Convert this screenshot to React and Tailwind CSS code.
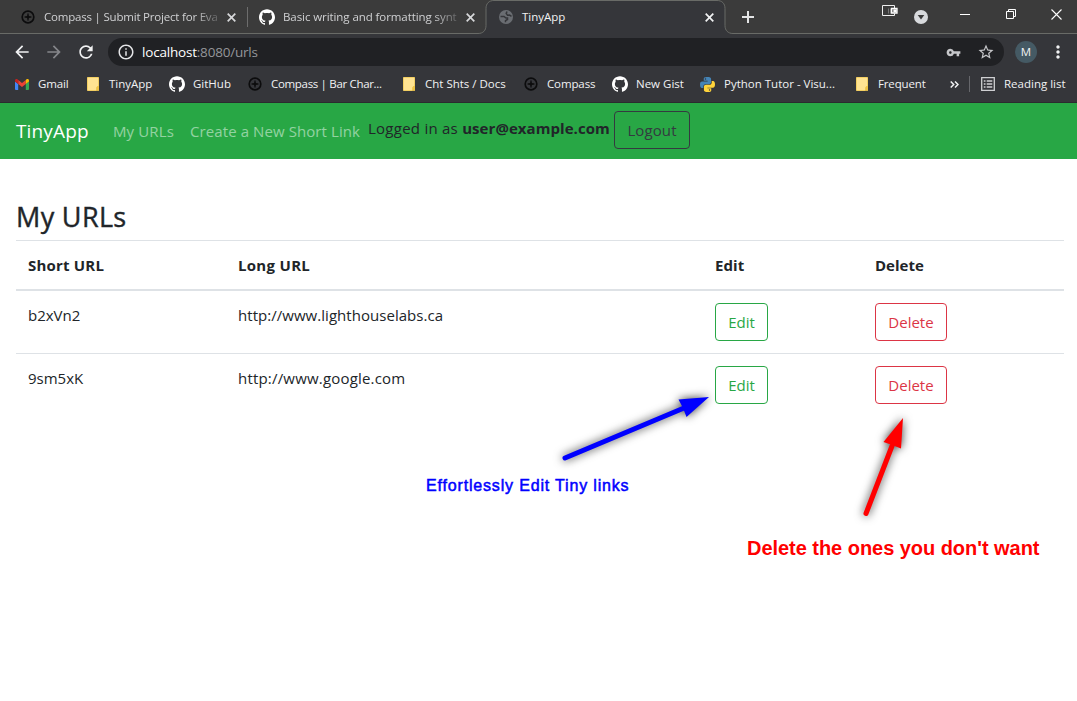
import React from "react";
import { SiGithub } from "react-icons/si";
import { MdRefresh, MdArrowBack, MdArrowForward, MdInfoOutline, MdStarBorder, MdVpnKey, MdMoreVert } from "react-icons/md";

function Compass() {
  return (
    <svg width="14" height="14" viewBox="0 0 14 14" fill="none" stroke="#0c0c0d" className="shrink-0">
      <circle cx="7" cy="7" r="5.8" strokeWidth="1.7" />
      <path d="M7 3.6v6.8M3.6 7h6.8" strokeWidth="1.3" />
      <path d="M7 5l2 2-2 2-2-2z" fill="#0c0c0d" stroke="none" />
    </svg>
  );
}

function Globe() {
  return (
    <svg width="14" height="14" viewBox="0 0 14 14" className="relative shrink-0">
      <circle cx="7" cy="7" r="7" fill="#6a6d72" />
      <path d="M1.500 6.500h3.500l2 1.500h1.500v1.500l-2 1.200v1.500" fill="none" stroke="#35363a" strokeWidth="1.500" />
      <path d="M8 1.500L7.200 3.500l1.300 1.700 2-.2 2 1.300" fill="none" stroke="#35363a" strokeWidth="1.500" />
    </svg>
  );
}

function Folder() {
  return (
    <svg width="12" height="14" viewBox="0 0 12 14" className="shrink-0">
      <path d="M.5.5h11v8.5l.5 0v4.5H.5z" fill="#ffe391" />
      <path d="M.5 .5h11V9M.5.5v13h9" fill="none" stroke="#f3cf62" />
      <path d="M9.2 13.8V10.5L10.5 9H12v4.8z" fill="#edc243" />
    </svg>
  );
}

function Gmail() {
  return (
    <svg width="14" height="11" viewBox="0 0 14 11" className="shrink-0">
      <path d="M0 2.5l3.2 2.4V11H1a1 1 0 0 1-1-1z" fill="#4285f4" />
      <path d="M14 2.5l-3.2 2.4V11H13a1 1 0 0 0 1-1z" fill="#34a853" />
      <path d="M3.2 1L7 3.9 10.8 1v4L7 7.9 3.2 5z" fill="#ea4335" />
      <path d="M0 2.5V1.6C0 .1 1.5-.5 2.7.5l.5.5v4z" fill="#c5221f" />
      <path d="M14 2.5V1.6C14 .1 12.500-.5 11.300.5l-.5.500v4z" fill="#fbbc04" />
    </svg>
  );
}

function Python() {
  const half = "M12 0C6.500 0 6 1.600 6 3v3h6.200v1H3.500C1 7 0 9 0 12s1 5.500 3 5.500h2.300V15c0-2 1.600-3.500 3.600-3.500h5.600c1.900 0 3.200-1.300 3.200-3V3.200C17.700 1 15.500 0 12 0z";
  return (
    <svg width="15" height="15" viewBox="0 0 24 24" className="shrink-0">
      <path d={half} fill="#4584b6" />
      <path d={half} fill="#ffd43b" transform="rotate(180 12 12)" />
      <circle cx="8.800" cy="3.200" r="1.100" fill="#35363a" />
      <circle cx="15.200" cy="20.800" r="1.100" fill="#35363a" />
    </svg>
  );
}

function Close({ color }) {
  return (
    <svg width="9" height="9" viewBox="0 0 9 9" stroke={color} strokeWidth="1.700" className="shrink-0">
      <path d="M.7.7l7.600 7.600M8.300.7L.7 8.300" />
    </svg>
  );
}

function BrowserTabs() {
  return (
    <div className="flex h-[34px] bg-[#3b3b3b] pl-2 text-[11.5px] leading-[34px] text-[#d0d1d3] shadow-[inset_0_-1px_0_#696b67]">
      <div className="flex w-[239px] items-center pl-[13px]">
        <Compass />
        <div className="ml-[9px] w-[176px] whitespace-nowrap tracking-[-0.2px] [mask-image:linear-gradient(to_right,black_150px,transparent_182px)]">
          Compass | Submit Project for Eva
        </div>
        <span className="ml-[7px] flex"><Close color="#d7d8da" /></span>
      </div>
      <div className="mt-[7px] h-5 w-px bg-[#6d6d6d]" />
      <div className="flex w-[238px] items-center pl-[11px]">
        <SiGithub size={16} color="#fff" className="shrink-0" />
        <div className="ml-2 w-[176px] whitespace-nowrap tracking-[-0.08px] [mask-image:linear-gradient(to_right,black_150px,transparent_182px)]">
          Basic writing and formatting synt
        </div>
        <span className="ml-[7px] flex"><Close color="#d7d8da" /></span>
      </div>
      <div className="relative flex w-[239px] items-center pl-[13px] text-[#f1f2f3]">
        <svg width="255" height="34" viewBox="0 0 255 34" className="absolute top-0 -left-2">
          <path d="M0 33.500c5 0 8-3 8-8V8.500C8 3.500 11 .5 16 .5H239c5 0 8 3 8 8V25.500c0 5 3 8 8 8V34H0z" fill="#35363a" />
          <path d="M0 33.500c5 0 8-3 8-8V8.500C8 3.500 11 .5 16 .5H239c5 0 8 3 8 8V25.500c0 5 3 8 8 8" fill="none" stroke="#696b67" />
        </svg>
        <Globe />
        <div className="relative ml-[9px] w-[176px]">TinyApp</div>
        <span className="relative ml-[7px] flex"><Close color="#f1f2f3" /></span>
      </div>
      <div className="flex flex-1 items-center pl-[17px]">
        <svg width="12" height="12" viewBox="0 0 12 12" stroke="#e3e4e5" strokeWidth="2"><path d="M6 0v12M0 6h12" /></svg>
      </div>
      <div className="flex w-[195px] pt-[5px]">
        <svg width="16" height="12" viewBox="0 0 16 12" fill="none">
          <path d="M12.500 3.500V.5H.5v10h12V8.500" stroke="#eee" />
          <path d="M6.500 3.500v5M8.500 3.500v5" stroke="#777" />
          <path d="M9.500 3.500h5.500v4.500H9.500z" fill="#777" stroke="#fff" strokeWidth="1.300" />
          <path d="M11.500 4.500h3v2.500h-3z" fill="#fff" />
        </svg>
        <svg width="14" height="14" viewBox="0 0 14 14" className="ml-4 mt-[5px]">
          <circle cx="7" cy="7" r="7" fill="#d8dadd" />
          <path d="M3.700 5h6.600L7 9.500z" fill="#3b3b3b" />
        </svg>
        <svg width="10" height="2" viewBox="0 0 10 2" className="ml-8 mt-[9px]"><path d="M0 .5h10" stroke="#fff" /></svg>
        <svg width="10" height="10" viewBox="0 0 10 10" fill="none" stroke="#fff" className="ml-[36px] mt-[4px]">
          <path d="M.5 2.500h7v7h-7zM2.500 2.500v-2h7v7h-2" />
        </svg>
        <svg width="11" height="11" viewBox="0 0 11 11" stroke="#fff" strokeWidth="1.100" className="ml-[35px] mt-[4px]"><path d="M.5.5l10 10M10.500.5l-10 10" /></svg>
      </div>
    </div>
  );
}

function Toolbar() {
  return (
    <div className="flex h-[36px] items-center pl-3 text-[#f1f2f3]">
      <MdArrowBack size={20} />
      <MdArrowForward size={20} color="#85868a" className="ml-3" />
      <MdRefresh size={20} className="ml-3" />
      <div className="ml-3 flex h-7 w-[896px] items-center rounded-full bg-[#202124] pl-[9px] text-[13.5px] tracking-[-0.2px] text-[#94969a]">
        <MdInfoOutline size={18} color="#e4e5e7" />
        <div className="ml-[7px] flex-1"><span className="text-white">localhost</span>:8080/urls</div>
        <MdVpnKey size={15} color="#c6c7ca" />
        <MdStarBorder size={18} color="#c6c7ca" className="ml-4 mr-[9px]" />
      </div>
      <div className="ml-[11px] flex h-[22px] w-[22px] items-center justify-center rounded-full bg-[#455a64] text-[11.5px]">M</div>
      <MdMoreVert size={20} className="ml-[11px]" />
    </div>
  );
}

function BookmarksBar() {
  return (
    <div className="grid h-[28px] grid-cols-[72px_82px_79px_155px_121px_88px_88px_156px_auto] items-center pl-[15px] text-[11.5px] whitespace-nowrap text-[#f1f2f3] [&>div]:flex [&>div]:items-center">
      <div className="gap-[9px]"><Gmail /><span className="tracking-[-0.15px]">Gmail</span></div>
      <div className="gap-[10px]"><Folder />TinyApp</div>
      <div className="gap-2"><SiGithub size={16} color="#fff" />GitHub</div>
      <div className="gap-[9px]"><Compass /><span className="tracking-[-0.32px]">Compass | Bar Char...</span></div>
      <div className="gap-[10px]"><Folder />Cht Shts / Docs</div>
      <div className="gap-[9px]"><Compass /><span className="tracking-[-0.12px]">Compass</span></div>
      <div className="gap-2"><SiGithub size={16} color="#fff" />New Gist</div>
      <div className="gap-[9px]"><Python />Python Tutor - Visu...</div>
      <div>
        <Folder />
        <span className="ml-[10px] w-[72px] tracking-[-0.15px]">Frequent</span>
        <svg width="9" height="7" viewBox="0 0 9 7" fill="none" stroke="#f1f2f3" strokeWidth="1.500"><path d="M.7.5l3 3-3 3M5 .5l3 3-3 3" /></svg>
        <span className="ml-[10px] h-4 w-px bg-[#66676b]" />
        <svg width="14" height="14" viewBox="0 0 14 14" fill="none" stroke="#cfd0d2" className="ml-[11px] mr-[9px]">
          <path d="M.7.7h12.600v12.600H.7z" strokeWidth="1.300" />
          <path d="M2.800 4h1.700M2.800 7h1.700M2.800 10h1.700M5.700 4h5.600M5.700 7h5.600M5.700 10h5.600" strokeWidth="1.400" />
        </svg>
        Reading list
      </div>
    </div>
  );
}

function AppNav() {
  return (
    <nav className="flex h-14 items-center bg-[#28a745] pl-4 text-[15px] whitespace-nowrap text-[#212529]">
      <div className="w-[97px] text-[19px] tracking-[0.15px] text-white">TinyApp</div>
      <div className="w-[77px] tracking-[0.12px] text-white/50">My URLs</div>
      <div className="w-[178px] tracking-[0.09px] text-white/50">Create a New Short Link</div>
      <div className="w-[246px] pb-[6px] tracking-[0.14px]"><span className="tracking-[0.25px]">Logged in as </span><b className="tracking-[0.06px]">user@example.com</b></div>
      <button className="mb-[2px] h-[38px] w-[76px] rounded border border-[#343a40] text-[#343a40] tracking-[0.1px]">Logout</button>
    </nav>
  );
}

const urls = [
  { id: "b2xVn2", long: "http://www.lighthouselabs.ca", tracking: "tracking-[0.04px]" },
  { id: "9sm5xK", long: "http://www.google.com", tracking: "tracking-[0.19px]" },
];

function UrlTable() {
  return (
    <main className="pl-4 pr-[13px] pt-[41px] text-[15px] text-[#212529]">
      <h3 className="mb-[6px] h-[34px] text-[27px] leading-[33px] font-medium tracking-[0.35px] [-webkit-text-stroke:0.4px_#212529]">My URLs</h3>
      <table className="w-full table-fixed border-separate border-spacing-0 text-left [&_td]:border-t [&_td]:border-[#dee2e6] [&_td]:px-3 [&_td]:pt-3 [&_th]:border-t [&_th]:border-b [&_th]:border-[#dee2e6] [&_th]:px-3">
        <thead>
          <tr className="h-[50px]">
            <th className="w-[210px] tracking-[0.2px]">Short URL</th>
            <th className="w-[477px] tracking-[0.3px]">Long URL</th>
            <th className="w-[160px] tracking-[0.1px]">Edit</th>
            <th>Delete</th>
          </tr>
        </thead>
        <tbody>
          {urls.map((u) => (
            <tr key={u.id} className="h-[63px] align-top leading-6">
              <td>{u.id}</td>
              <td className={u.tracking}>{u.long}</td>
              <td><button className="block h-[38px] w-[53px] rounded border border-[#28a745] text-[#28a745]">Edit</button></td>
              <td><button className="block h-[38px] w-[72px] rounded border border-[#dc3545] text-[#dc3545]">Delete</button></td>
            </tr>
          ))}
        </tbody>
      </table>
    </main>
  );
}

function Annotations() {
  return (
    <div className="pointer-events-none absolute inset-0 font-['Liberation_Sans',Arial,sans-serif] whitespace-nowrap">
      <svg width="1077" height="701" viewBox="0 0 1077 701" className="absolute inset-0 [&>g]:drop-shadow-[0_0_5px_rgba(0,0,0,0.8)]">
        <g fill="#00f" stroke="#00f">
          <path d="M565 458L684 408" strokeWidth="5" strokeLinecap="round" />
          <path d="M709 397L678.500 399.500L683 408L686.500 417z" stroke="none" />
        </g>
        <g fill="#f00" stroke="#f00">
          <path d="M866 513.500L892 446" strokeWidth="5" strokeLinecap="round" />
          <path d="M903 418L883.500 442L892 445L901 448.500z" stroke="none" />
        </g>
      </svg>
      <div className="absolute left-[426px] top-[477px] text-[16px] leading-[18px] tracking-[0.83px] text-[#00f] [-webkit-text-stroke:0.5px_#00f]">Effortlessly Edit Tiny links</div>
      <div className="absolute left-[747px] top-[536px] text-[20px] leading-[24px] font-bold tracking-[-0.04px] text-[#f00]">Delete the ones you don't want</div>
    </div>
  );
}

export default function App() {
  return (
    <div className="relative h-[701px] w-[1077px] overflow-hidden bg-white font-['Open_Sans','Noto_Sans',sans-serif]">
      <header className="h-[103px] border-b border-[#2a2b2e] bg-[#35363a]">
        <BrowserTabs />
        <Toolbar />
        <BookmarksBar />
      </header>
      <AppNav />
      <UrlTable />
      <Annotations />
    </div>
  );
}
